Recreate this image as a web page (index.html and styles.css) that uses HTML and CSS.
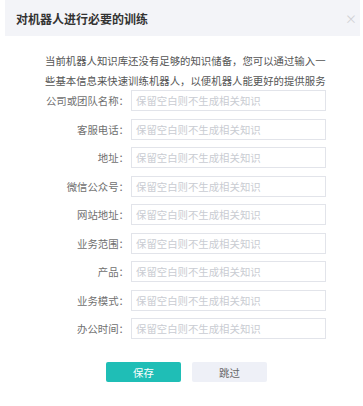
FILE: index.html
```html
<!DOCTYPE html>
<html lang="zh-CN">
<head>
    <meta charset="UTF-8">
    <meta name="viewport" content="width=device-width, initial-scale=1.0">
    <title>对机器人进行必要的训练</title>
    <link rel="stylesheet" href="styles.css">
</head>
<body>
    <div class="dialog">
        <div class="dialog-header">
            <h2>对机器人进行必要的训练</h2>
            <span class="close">×</span>
        </div>

        <p class="intro">当前机器人知识库还没有足够的知识储备，您可以通过输入一些基本信息来快速训练机器人，以便机器人能更好的提供服务</p>

        <div class="form">
            <div class="row"><label>公司或团队名称：</label><input type="text" placeholder="保留空白则不生成相关知识"></div>
            <div class="row"><label>客服电话：</label><input type="text" placeholder="保留空白则不生成相关知识"></div>
            <div class="row"><label>地址：</label><input type="text" placeholder="保留空白则不生成相关知识"></div>
            <div class="row"><label>微信公众号：</label><input type="text" placeholder="保留空白则不生成相关知识"></div>
            <div class="row"><label>网站地址：</label><input type="text" placeholder="保留空白则不生成相关知识"></div>
            <div class="row"><label>业务范围：</label><input type="text" placeholder="保留空白则不生成相关知识"></div>
            <div class="row"><label>产品：</label><input type="text" placeholder="保留空白则不生成相关知识"></div>
            <div class="row"><label>业务模式：</label><input type="text" placeholder="保留空白则不生成相关知识"></div>
            <div class="row"><label>办公时间：</label><input type="text" placeholder="保留空白则不生成相关知识"></div>
        </div>

        <div class="actions">
            <button class="btn-save">保存</button>
            <button class="btn-skip">跳过</button>
        </div>
    </div>
</body>
</html>
```

FILE: styles.css
```css
body {
    margin: 0;
    background: #fff;
    font-family: "Noto Sans CJK SC", "Noto Sans", sans-serif;
}
.dialog {
    margin: 0 3px 0 5px;
    background: #fff;
}
.dialog-header {
    height: 36px;
    background: #f3f4f8;
    display: flex;
    align-items: center;
    justify-content: space-between;
    padding: 0 3px 0 11px;
}
.dialog-header h2 {
    margin: 0;
    font-size: 12px;
    font-weight: bold;
    color: #333;
}
.close {
    font-size: 12px;
    color: #d0d0d4;
}
.intro {
    margin: 15px 0 0 40px;
    width: 284px;
    font-size: 10.4px;
    line-height: 19.5px;
    color: #555;
}
.form {
    padding-left: 38px;
}
.row {
    display: flex;
    align-items: center;
    height: 21px;
    margin-bottom: 7.5px;
}
.row label {
    width: 86px;
    text-align: right;
    font-size: 10.4px;
    color: #707070;
}
.row input {
    margin-left: 2px;
    width: 195px;
    height: 21px;
    box-sizing: border-box;
    border: 1px solid #e2e4ea;
    padding: 0 4px;
    font-family: inherit;
    font-size: 10.4px;
    outline: none;
}
.row input::placeholder {
    color: #c9ccd2;
}
.actions {
    display: flex;
    gap: 11px;
    padding-left: 101px;
    margin-top: 23px;
}
.actions button {
    width: 75px;
    height: 20px;
    border: none;
    border-radius: 2px;
    font-family: inherit;
    font-size: 10.4px;
    cursor: pointer;
}
.btn-save {
    background: #1fbeb6;
    color: #fff;
}
.btn-skip {
    background: #eef0f7;
    color: #666;
}
```
